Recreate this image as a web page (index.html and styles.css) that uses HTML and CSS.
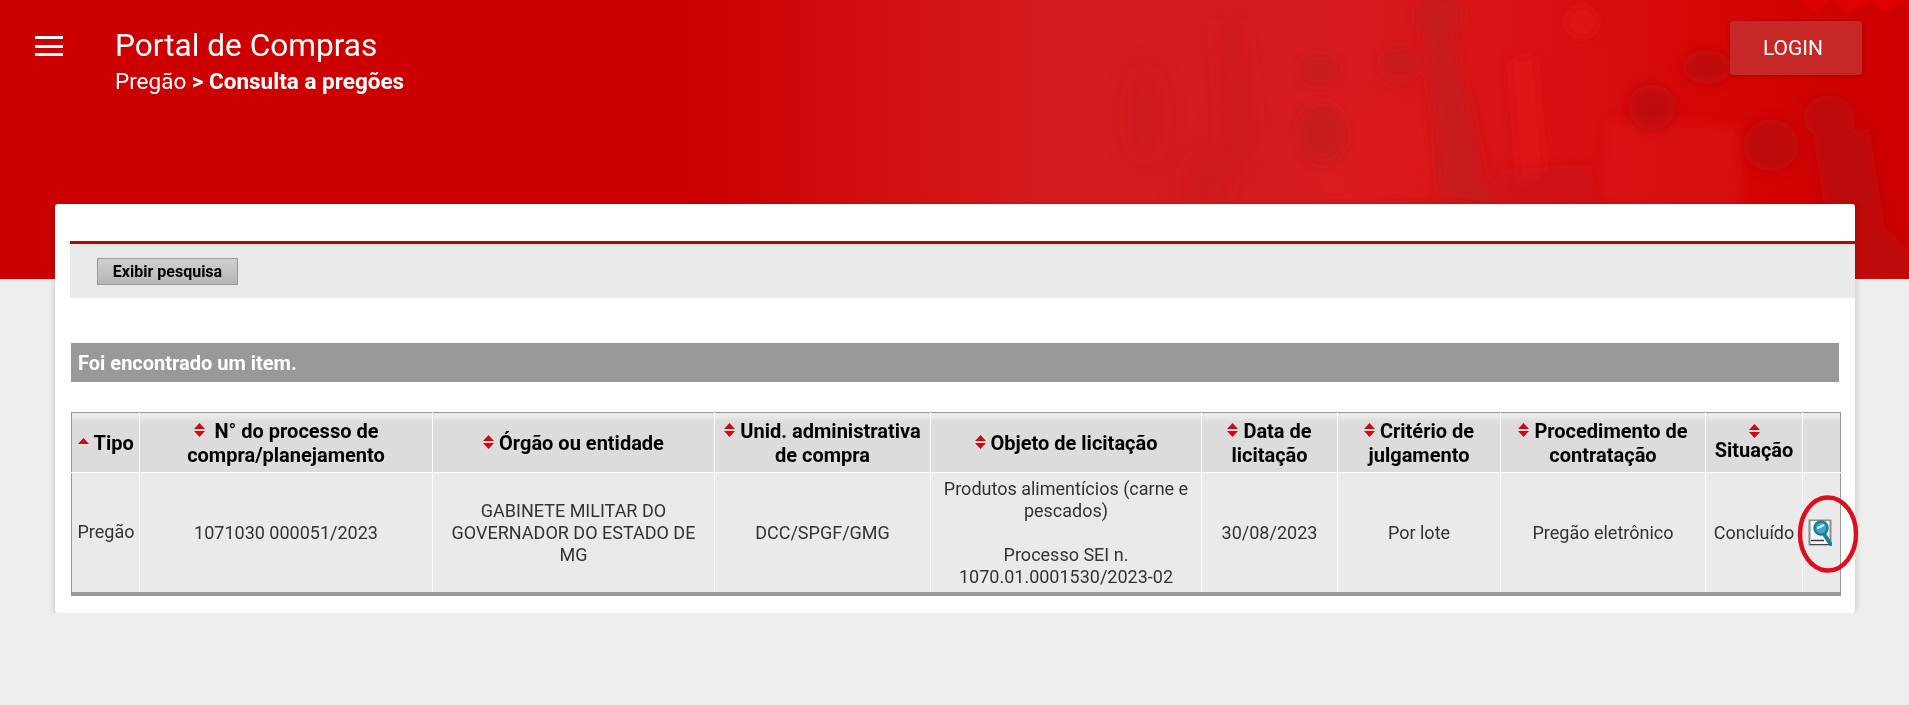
FILE: index.html
```html
<!DOCTYPE html>
<html lang="pt-BR">
<head>
  <meta charset="UTF-8">
  <title>Portal de Compras</title>
  <meta name="viewport" content="width=device-width, initial-scale=1.0">
  <link rel="stylesheet" href="styles.css">
</head>
<body>
  <svg class="sprites" width="0" height="0">
    <symbol id="sort" viewBox="0 0 11 14">
      <path d="M5.5 0 11 6H0Z" fill="#cc0a12"/>
      <path d="M5.5 14 11 8H0Z" fill="#cc0a12"/>
    </symbol>
  </svg>

  <header class="hero">
    <!-- faded photo of people behind the red -->
    <svg class="hero-photo" viewBox="0 0 1909 279" width="1909" height="279">
      <defs>
        <linearGradient id="hero-bg" x1="0" x2="1" y1="0" y2="0">
          <stop offset="0" stop-color="#cc0000"/>
          <stop offset="0.36" stop-color="#cc0000"/>
          <stop offset="0.55" stop-color="#d51c1e"/>
          <stop offset="0.7" stop-color="#d71c1f"/>
          <stop offset="0.8" stop-color="#d91114"/>
          <stop offset="0.9" stop-color="#d40606"/>
          <stop offset="1" stop-color="#cc0000"/>
        </linearGradient>
        <filter id="soft" filterUnits="userSpaceOnUse" x="0" y="0" width="1909" height="279"><feGaussianBlur stdDeviation="6"/></filter>
        <filter id="softer" filterUnits="userSpaceOnUse" x="0" y="0" width="1909" height="279"><feGaussianBlur stdDeviation="12"/></filter>
      </defs>
      <rect width="1909" height="279" fill="url(#hero-bg)"/>
      <path d="M1800 0 1815 12 1830 0 1850 14 1870 0 1885 12 1909 0Z" fill="#e00000"/>
      <g fill="#c2161b" opacity="0.4" filter="url(#softer)">
        <ellipse cx="1145" cy="115" rx="18" ry="50"/>
        <path d="M1215 20 1245 20 1260 150 1225 190Z"/>
        <ellipse cx="1205" cy="190" rx="24" ry="40"/>
      </g>
      <g fill="#e01a1c" opacity="0.35" filter="url(#soft)">
        <path d="M1300 90 1420 100 1440 190 1320 200Z"/>
        <path d="M1610 120 1740 125 1745 260 1600 200Z"/>
      </g>
      <g fill="#e31416" opacity="0.7" filter="url(#soft)">
        <path d="M1510 60 1535 55 1545 170 1520 190Z"/>
        <ellipse cx="1582" cy="22" rx="16" ry="16"/>
      </g>
      <g fill="#c21a1d" opacity="0.75" filter="url(#soft)">
        <ellipse cx="1322" cy="133" rx="24" ry="30"/>
        <ellipse cx="1319" cy="70" rx="20" ry="14"/>
        <ellipse cx="1400" cy="63" rx="18" ry="16"/>
        <ellipse cx="1440" cy="16" rx="24" ry="20"/>
        <path d="M1420 20 1450 30 1468 100 1485 180 1500 210 1440 200 1435 120Z"/>
        <path d="M1500 170 1590 165 1600 210 1490 215Z" opacity="0.5"/>
      </g>
      <g fill="#ba0a0c" opacity="0.8" filter="url(#soft)">
        <ellipse cx="1652" cy="107" rx="24" ry="23"/>
        <ellipse cx="1707" cy="67" rx="25" ry="17"/>
        <ellipse cx="1771" cy="145" rx="28" ry="26"/>
        <ellipse cx="1829" cy="117" rx="26" ry="22"/>
        <path d="M1812 130 1870 130 1890 260 1850 279 1830 250Z"/>
        <path d="M1860 200 1909 250 1909 279 1860 279Z"/>
      </g>
    </svg>

    <button class="menu-btn" aria-label="Menu">
      <span></span><span></span><span></span>
    </button>
    <div class="hero-title">
      <h1>Portal de Compras</h1>
      <p>Pregão <b>&gt; Consulta a pregões</b></p>
    </div>
    <button class="login-btn">LOGIN</button>
  </header>

  <main class="card">
    <div class="search-bar">
      <button class="search-btn">Exibir pesquisa</button>
    </div>

    <div class="result-bar">Foi encontrado um item.</div>

    <div class="table-wrap">
      <table class="results">
        <colgroup>
          <col class="c-tipo"><col class="c-proc"><col class="c-orgao"><col class="c-unid"><col class="c-obj">
          <col class="c-data"><col class="c-crit"><col class="c-cont"><col class="c-sit"><col class="c-acao">
        </colgroup>
        <thead>
          <tr>
            <th><svg class="sort sort-up" viewBox="0 0 11 6"><path d="M5.5 0 11 6H0Z" fill="#cc0a12"/></svg> Tipo</th>
            <th><svg class="sort"><use href="#sort"/></svg>&nbsp; N° do processo de compra/planejamento</th>
            <th><svg class="sort"><use href="#sort"/></svg> Órgão ou entidade</th>
            <th><svg class="sort"><use href="#sort"/></svg> Unid. administrativa de compra</th>
            <th><svg class="sort"><use href="#sort"/></svg> Objeto de licitação</th>
            <th><svg class="sort"><use href="#sort"/></svg> Data de licitação</th>
            <th><svg class="sort"><use href="#sort"/></svg> Critério de julgamento</th>
            <th><svg class="sort"><use href="#sort"/></svg> Procedimento de contratação</th>
            <th><svg class="sort sort-block"><use href="#sort"/></svg>Situação</th>
            <th></th>
          </tr>
        </thead>
        <tbody>
          <tr>
            <td>Pregão</td>
            <td>1071030 000051/2023</td>
            <td>GABINETE MILITAR DO GOVERNADOR DO ESTADO DE MG</td>
            <td>DCC/SPGF/GMG</td>
            <td>Produtos alimentícios (carne e pescados)<br><br>Processo SEI n. 1070.01.0001530/2023-02</td>
            <td>30/08/2023</td>
            <td>Por lote</td>
            <td>Pregão eletrônico</td>
            <td>Concluído</td>
            <td class="acao">
              <svg class="detail-icon" viewBox="0 0 24 27" width="24" height="27">
                <rect x="0.5" y="0.5" width="23" height="26" fill="#8c8c8c"/>
                <rect x="2.5" y="2" width="19" height="23" fill="#f4f7f8"/>
                <path d="M3 21.500h13" stroke="#333" stroke-width="1.4"/>
                <path d="M2 25.500h19" stroke="#444" stroke-width="1"/>
                <path d="M16 15 22.500 25" stroke="#1d8099" stroke-width="4" stroke-linecap="round"/>
                <circle cx="13" cy="9" r="6.500" fill="#46a6bf" stroke="#14809e" stroke-width="2.500"/>
                <path d="M10 9 15.500 6" stroke="#d4eef5" stroke-width="2" stroke-linecap="round"/>
              </svg>
              <!-- red circle somebody drew on the screenshot -->
              <svg class="mark" viewBox="0 0 62 78" width="62" height="78">
                <ellipse cx="31" cy="39" rx="28" ry="36.500" fill="none" stroke="#dd0f1e" stroke-width="4.500"/>
              </svg>
            </td>
          </tr>
        </tbody>
      </table>
    </div>
  </main>
</body>
</html>
```

FILE: styles.css
```css
* { box-sizing: border-box; }
body { font-family: Roboto, "Liberation Sans", sans-serif; background: #eeeeee; margin: 0; color: #333; }
.sprites { display: block; height: 0; }

.hero {
  position: relative;
  height: 279px;
  background: #cc0000;
  display: flex;
  align-items: flex-start;
  padding: 21px 47px 0 35px;
  color: #fff;
  overflow: hidden;
}
.hero-photo { position: absolute; left: 0; top: 0; }
.menu-btn {
  position: relative;
  width: 28px;
  height: 20px;
  margin-top: 15px;
  padding: 0;
  border: none;
  background: none;
  display: flex;
  flex-direction: column;
  justify-content: space-between;
}
.menu-btn span { display: block; height: 3px; background: #fff; }
.hero-title { position: relative; margin-left: 52px; flex: 1; }
.hero-title h1 { margin: 5px 0 0; font-size: 31.6px; font-weight: 400; line-height: 40px; }
.hero-title p { margin: 0; font-size: 22.5px; line-height: 30px; }
.login-btn {
  position: relative;
  width: 132px;
  height: 54px;
  padding: 0 6px 0 0;
  border: none;
  border-radius: 3px;
  background: #c62828;
  color: #fff;
  font-family: inherit;
  font-size: 21px;
  box-shadow: 0 1px 4px rgba(0,0,0,0.2);
}

.card {
  position: relative;
  width: 1800px;
  height: 409px;
  margin: -75px 0 0 55px;
  padding: 37px 0 0 15px;
  background: #fff;
  border-radius: 3px;
  box-shadow: 0 1px 6px rgba(0,0,0,0.2);
}
.search-bar {
  height: 57px;
  background: #eaeaea;
  border-top: 3px solid #c40000;
  padding: 14px 0 0 27px;
}
.search-btn {
  display: block;
  width: 141px;
  height: 27px;
  padding: 0;
  border: 1px solid #999;
  background: linear-gradient(#cfcfcf, #b6b6b6);
  color: #000;
  font-family: inherit;
  font-size: 16px;
  font-weight: 700;
}
.result-bar {
  width: 1768px;
  height: 39px;
  margin: 45px 0 0 1px;
  padding-left: 7px;
  background: #999;
  color: #fff;
  font-size: 20px;
  font-weight: 700;
  line-height: 41px;
}
.table-wrap { margin: 30px 0 0 1px; }

.results {
  width: 1769px;
  table-layout: fixed;
  border-collapse: collapse;
  border: 1px solid #999;
  border-bottom: 4px solid #999;
}
.c-tipo { width: 68px; }
.c-proc { width: 293px; }
.c-orgao { width: 282px; }
.c-unid { width: 216px; }
.c-obj { width: 271px; }
.c-data { width: 136px; }
.c-crit { width: 163px; }
.c-cont { width: 205px; }
.c-sit { width: 97px; }
.c-acao { width: 38px; }
.results th, .results td { border: 1px solid #fff; text-align: center; padding: 0 6px; }
.results tr > :first-child { border-left: none; padding: 0 3px 0 4px; white-space: nowrap; }
.results tr > :last-child { border-right: none; }
.results th {
  height: 60px;
  border-top: none;
  background: linear-gradient(#f0f0f0, #dcdcdc 14%);
  color: #000;
  font-size: 20px;
  font-weight: 700;
  line-height: 24px;
}
.results td {
  height: 121px;
  border-bottom: none;
  background: #eaeaea;
  font-size: 18px;
  line-height: 22px;
  padding-top: 2px;
}
.results td.acao { position: relative; padding: 0; }
.sort { width: 11px; height: 14px; vertical-align: 1px; }
.sort-up { height: 6px; vertical-align: 6px; }
.sort-block { display: block; margin: 0 auto; }
.detail-icon { display: block; margin: 0 0 0 5px; }
.mark { position: absolute; left: -6px; top: 22px; }
```
